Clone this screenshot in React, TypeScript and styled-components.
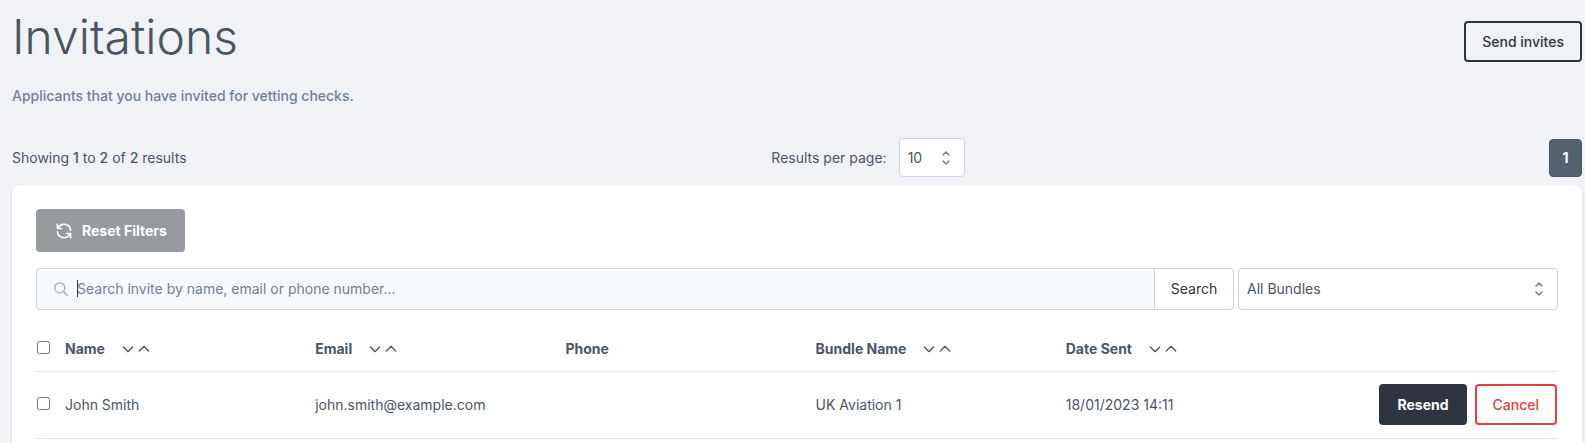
import React from "react";
import styled, { createGlobalStyle, css } from "styled-components";

const GlobalStyle = createGlobalStyle`
  *, *::before, *::after { box-sizing: border-box; }
  body {
    margin: 0;
    background: #f1f2f6;
    color: #4a5568;
    font-family: Inter, "Liberation Sans", sans-serif;
    font-size: 14px;
    line-height: 20px;
  }
  button, input, select { font: inherit; color: inherit; margin: 0; }
`;

const Page = styled.main`
  padding: 8px 3px 0 12px;
`;

const Header = styled.header`
  display: flex;
  justify-content: space-between;
  align-items: flex-start;
  padding-top: 5px;
`;

const Title = styled.h1`
  margin: 0;
  font-size: 48px;
  line-height: 48px;
  font-weight: 300;
  color: #4a5561;
`;

const Subtitle = styled.p`
  margin: 24px 0 31px;
  line-height: 22px;
  font-weight: 500;
  color: #718096;
`;

type Variant = "outline" | "dark" | "danger" | "muted";

const variants = {
  outline: css`
    background: transparent;
    border-color: #2d3640;
    color: #2d3640;
    font-weight: 500;
  `,
  dark: css`
    background: #2f353f;
    border-color: #2f353f;
    color: #ffffff;
    font-weight: 700;
  `,
  danger: css`
    background: #ffffff;
    border-color: #e53e3e;
    color: #e53e3e;
    font-weight: 500;
  `,
  muted: css`
    background: #979a9f;
    border-color: #979a9f;
    color: #ffffff;
    font-weight: 700;
  `,
};

const Button = styled.button<{ $variant: Variant }>`
  display: inline-flex;
  align-items: center;
  gap: 8px;
  min-height: 41px;
  padding: 8px 16px;
  border: 2px solid;
  border-radius: 4px;
  white-space: nowrap;
  ${(p) => variants[p.$variant]}
`;

const SendButton = styled(Button)`
  margin-top: 8px;
`;

const ResetButton = styled(Button)`
  min-height: 43px;
`;

const ResultsBar = styled.section`
  display: grid;
  grid-template-columns: 1fr auto 1fr;
  align-items: center;
  margin-bottom: 8px;
`;

const Summary = styled.p`
  margin: 0;
  b { font-weight: 500; }
`;

const PerPage = styled.label`
  display: flex;
  align-items: center;
  gap: 12px;
  padding-left: 142px;
`;

const SelectWrap = styled.span`
  position: relative;
  display: flex;
  svg {
    position: absolute;
    right: 9px;
    top: 50%;
    transform: translateY(-50%);
    pointer-events: none;
  }
`;

const Select = styled.select<{ $size: "small" | "large" }>`
  appearance: none;
  width: ${(p) => (p.$size === "small" ? "66px" : "100%")};
  height: ${(p) => (p.$size === "small" ? "39px" : "42px")};
  padding: 0 32px 0 8px;
  background: #ffffff;
  border: 1px solid #cbd5e0;
  border-radius: 4px;
`;

const Pager = styled.nav`
  display: flex;
  justify-content: flex-end;
`;

const PageButton = styled.button`
  width: 33px;
  height: 38px;
  padding: 0;
  background: #55616e;
  border: 1px solid #4a5561;
  border-radius: 4px;
  color: #ffffff;
  font-weight: 700;
`;

const Card = styled.section`
  padding: 24px;
  background: #ffffff;
  border-radius: 8px;
  box-shadow: 0 1px 3px rgba(0, 0, 0, 0.1), 0 1px 2px rgba(0, 0, 0, 0.06);
`;

const Filters = styled.form`
  display: grid;
  grid-template-columns: minmax(0, 1fr) 320px;
  gap: 4px;
  margin: 16px 0;
`;

const SearchGroup = styled.div`
  display: flex;
`;

const SearchField = styled.label`
  position: relative;
  display: flex;
  flex: 1;
  align-items: center;
  height: 42px;
  padding-left: 16px;
  background: #f6fafe;
  border: 1px solid #cbd5e0;
  border-radius: 4px 0 0 4px;
`;

const Caret = styled.span`
  position: absolute;
  left: 40px;
  top: 11px;
  width: 1px;
  height: 17px;
  background: #2d3748;
`;

const SearchInput = styled.input`
  flex: 1;
  min-width: 0;
  height: 38px;
  padding: 0 8px 1px;
  background: transparent;
  border: 0;
  outline: 0;
  &::placeholder { color: #718096; opacity: 1; }
`;

const SearchButton = styled.button`
  width: 80px;
  padding: 0;
  margin-left: -1px;
  background: #ffffff;
  border: 1px solid #cbd5e0;
  border-radius: 0 4px 4px 0;
  color: #333333;
`;

const Table = styled.table`
  width: 100%;
  table-layout: fixed;
  border-collapse: collapse;
`;

const CheckCol = styled.col`
  width: 29px;
`;

const ActionsCol = styled.col`
  width: 242px;
`;

const HeadCell = styled.th`
  height: 45px;
  padding: 2px 0 0;
  border-bottom: 1px solid #e2e8f0;
  text-align: left;
  font-weight: 700;
`;

const Cell = styled.td`
  height: 67px;
  padding: 0;
  border-bottom: 1px solid #e2e8f0;
`;

const Check = styled.input`
  display: block;
  width: 13px;
  height: 13px;
  margin: 0 0 3px 1px;
`;

const Heading = styled.span`
  display: flex;
  align-items: center;
`;

const SortGroup = styled.span`
  display: inline-flex;
  margin-left: 15px;
`;

const SortButton = styled.button`
  display: flex;
  padding: 0;
  background: none;
  border: 0;
`;

const Actions = styled.div`
  display: flex;
  justify-content: flex-end;
  gap: 8px;
  padding-right: 1px;
`;

const Selector = () => (
  <svg width="20" height="20" viewBox="0 0 20 20" fill="none" stroke="#718096" strokeWidth="1.5" strokeLinecap="round" strokeLinejoin="round" aria-hidden="true">
    <path d="M7 7l3-3 3 3m0 6l-3 3-3-3" />
  </svg>
);

const RefreshIcon = () => (
  <svg width="20" height="20" viewBox="0 0 24 24" fill="none" stroke="currentColor" strokeWidth="2" strokeLinecap="round" strokeLinejoin="round" aria-hidden="true">
    <path d="M4 4v5h.582m15.356 2A8.001 8.001 0 004.582 9m0 0H9m11 11v-5h-.581m0 0a8.003 8.003 0 01-15.357-2m15.357 2H15" />
  </svg>
);

const SearchIcon = () => (
  <svg width="16" height="16" viewBox="0 0 16 16" fill="none" stroke="#a0aec0" strokeWidth="1.3" strokeLinecap="round" aria-hidden="true">
    <circle cx="6.8" cy="6.8" r="5" />
    <path d="M10.5 10.5l4 4" />
  </svg>
);

const Chevron = ({ up = false }: { up?: boolean }) => (
  <svg width="16" height="16" viewBox="0 0 24 24" fill="none" stroke="currentColor" strokeWidth="2" strokeLinecap="round" strokeLinejoin="round" aria-hidden="true">
    <path d={up ? "M5 15l7-7 7 7" : "M19 9l-7 7-7-7"} />
  </svg>
);

const columns = [
  { label: "Name", sortable: true },
  { label: "Email", sortable: true },
  { label: "Phone", sortable: false },
  { label: "Bundle Name", sortable: true },
  { label: "Date Sent", sortable: true },
];

const invites = [
  { name: "John Smith", email: "john.smith@example.com", phone: "", bundle: "UK Aviation 1", sent: "18/01/2023 14:11" },
];

export default function App() {
  return (
    <>
      <GlobalStyle />
      <Page>
        <Header>
          <div>
            <Title>Invitations</Title>
            <Subtitle>Applicants that you have invited for vetting checks.</Subtitle>
          </div>
          <SendButton type="button" $variant="outline">Send invites</SendButton>
        </Header>

        <ResultsBar>
          <Summary>Showing <b>1</b> to <b>2</b> of <b>2</b> results</Summary>
          <PerPage>
            Results per page:
            <SelectWrap>
              <Select $size="small" defaultValue="10">
                <option>10</option>
                <option>25</option>
                <option>50</option>
              </Select>
              <Selector />
            </SelectWrap>
          </PerPage>
          <Pager aria-label="Pagination">
            <PageButton type="button" aria-current="page">1</PageButton>
          </Pager>
        </ResultsBar>

        <Card>
          <ResetButton type="button" $variant="muted">
            <RefreshIcon />
            Reset Filters
          </ResetButton>

          <Filters onSubmit={(e) => e.preventDefault()}>
            <SearchGroup>
              <SearchField>
                <SearchIcon />
                <SearchInput type="text" aria-label="Search invites" placeholder="Search invite by name, email or phone number..." />
                <Caret />
              </SearchField>
              <SearchButton type="submit">Search</SearchButton>
            </SearchGroup>
            <SelectWrap>
              <Select $size="large" aria-label="Bundle">
                <option>All Bundles</option>
              </Select>
              <Selector />
            </SelectWrap>
          </Filters>

          <Table>
            <colgroup>
              <CheckCol />
              {columns.map((c) => <col key={c.label} />)}
              <ActionsCol />
            </colgroup>
            <thead>
              <tr>
                <HeadCell><Check type="checkbox" aria-label="Select all" /></HeadCell>
                {columns.map((c) => (
                  <HeadCell key={c.label} scope="col">
                    <Heading>
                      {c.label}
                      {c.sortable && (
                        <SortGroup>
                          <SortButton type="button" aria-label={`Sort ${c.label} descending`}><Chevron /></SortButton>
                          <SortButton type="button" aria-label={`Sort ${c.label} ascending`}><Chevron up /></SortButton>
                        </SortGroup>
                      )}
                    </Heading>
                  </HeadCell>
                ))}
                <HeadCell />
              </tr>
            </thead>
            <tbody>
              {invites.map((i) => (
                <tr key={i.email}>
                  <Cell><Check type="checkbox" aria-label={`Select ${i.name}`} /></Cell>
                  <Cell>{i.name}</Cell>
                  <Cell>{i.email}</Cell>
                  <Cell>{i.phone}</Cell>
                  <Cell>{i.bundle}</Cell>
                  <Cell>{i.sent}</Cell>
                  <Cell>
                    <Actions>
                      <Button type="button" $variant="dark">Resend</Button>
                      <Button type="button" $variant="danger">Cancel</Button>
                    </Actions>
                  </Cell>
                </tr>
              ))}
            </tbody>
          </Table>
        </Card>
      </Page>
    </>
  );
}
